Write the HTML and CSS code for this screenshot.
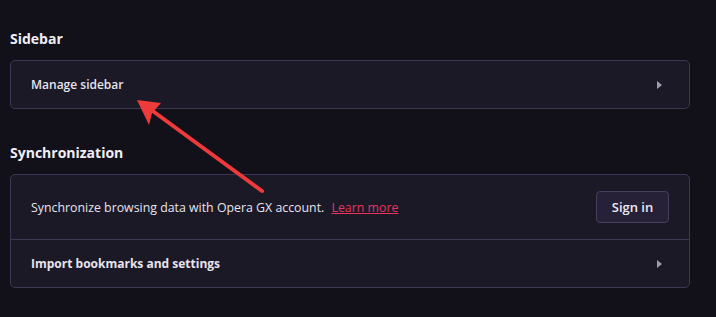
FILE: index.html
```html
<!DOCTYPE html>
<html lang="en">
<head>
  <meta charset="UTF-8" />
  <title>Settings</title>
  <link rel="stylesheet" href="styles.css">
</head>
<body>
  <div class="page">
    <h2 class="section-title">Sidebar</h2>
    <div class="card">
      <div class="row">
        <span class="row-label">Manage sidebar</span>
        <span class="chevron"></span>
      </div>
    </div>

    <h2 class="section-title">Synchronization</h2>
    <div class="card">
      <div class="row row-sync">
        <span class="row-text">Synchronize browsing data with Opera GX account. <a class="link" href="#">Learn more</a></span>
        <button class="btn">Sign in</button>
      </div>
      <div class="row">
        <span class="row-label bold">Import bookmarks and settings</span>
        <span class="chevron"></span>
      </div>
    </div>
  </div>

  <svg class="annotation" width="716" height="317" viewBox="0 0 716 317">
    <line x1="262" y1="191" x2="150" y2="109" stroke="#ee3a3a" stroke-width="4" stroke-linecap="round" />
    <polygon points="137,100 161,103 152,113 149,125" fill="#ee3a3a" />
  </svg>
</body>
</html>
```

FILE: styles.css
```css
body {
  margin: 0;
  background-color: #121019;
  font-family: "Open Sans", "Noto Sans", sans-serif;
  color: #e7e4ee;
  width: 716px;
  height: 317px;
  overflow: hidden;
  position: relative;
}
.page {
  padding: 28px 26px 0 10px;
}
.section-title {
  font-size: 14px;
  font-weight: 700;
  margin: 0 0 10px 0;
  line-height: 22px;
  color: #f0eef4;
}
.card {
  background-color: #1c1927;
  border: 1px solid #3f3656;
  border-radius: 5px;
  margin-bottom: 33px;
}
.row {
  display: flex;
  align-items: center;
  justify-content: space-between;
  height: 47px;
  padding: 0 27px 0 20px;
}
.row + .row {
  border-top: 1px solid #3f3656;
}
.row-sync {
  height: 64px;
  padding-right: 20px;
}
.row-label {
  font-size: 12px;
  font-weight: 600;
}
.row-label.bold {
  font-weight: 700;
}
.row-text {
  font-size: 12.35px;
}
.link {
  color: #e8335f;
  margin-left: 4px;
  text-decoration: underline;
}
.chevron {
  width: 0;
  height: 0;
  border-top: 4px solid transparent;
  border-bottom: 4px solid transparent;
  border-left: 5px solid #a09ab0;
}
.btn {
  font-family: inherit;
  font-size: 13px;
  font-weight: 600;
  color: #ece9f2;
  background-color: #262136;
  border: 1px solid #463d5f;
  border-radius: 4px;
  width: 73px;
  height: 32px;
  cursor: pointer;
}
.annotation {
  position: absolute;
  left: 0;
  top: 0;
  pointer-events: none;
}
```
